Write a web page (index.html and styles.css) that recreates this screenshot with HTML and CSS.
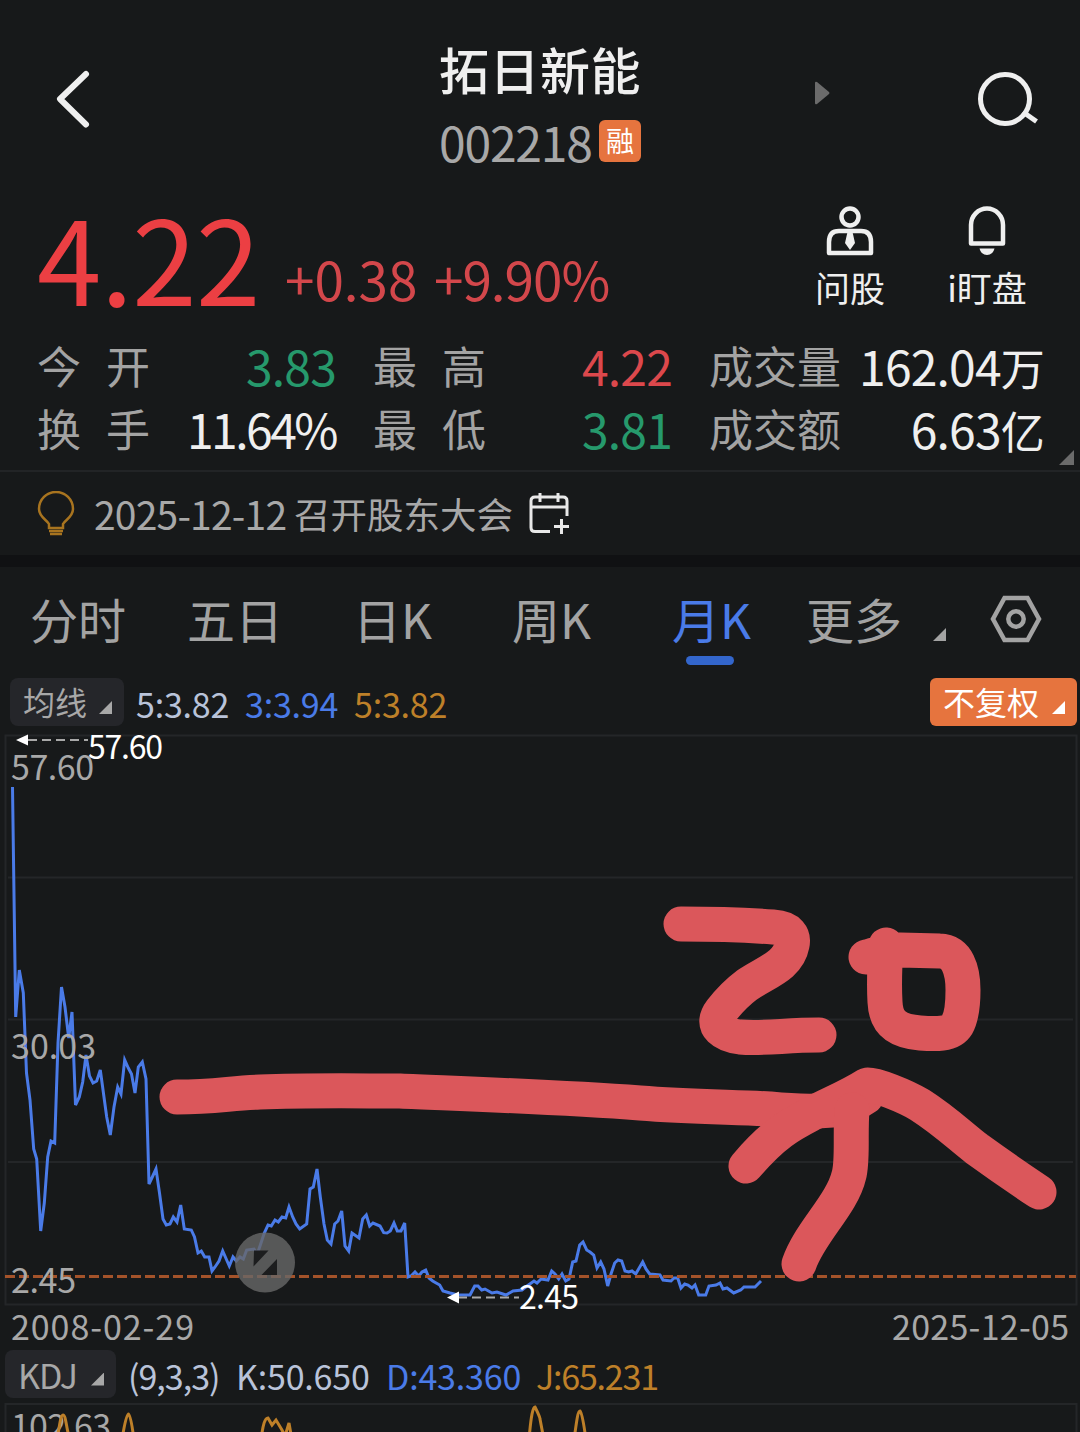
FILE: index.html
```html
<!DOCTYPE html>
<html lang="zh-CN">
<head>
  <meta charset="UTF-8">
  <meta name="viewport" content="width=device-width, initial-scale=1.0">
  <title>拓日新能 002218</title>
  <link rel="stylesheet" href="styles.css">
</head>
<body>
  <!-- Header -->
  <header class="header">
    <svg class="back" width="40" height="64" viewBox="0 0 40 64">
      <path d="M33 7 L7 32 L33 57.5" />
    </svg>
    <div class="stock">
      <h1>拓日新能</h1>
      <div class="code"><span>002218</span><i class="badge">融</i></div>
    </div>
    <svg class="next" width="15" height="24" viewBox="0 0 15 24">
      <path d="M0 2 Q0 0 2 1 L14 11 Q15 12 14 13 L2 23 Q0 24 0 22 Z" />
    </svg>
    <svg class="search" width="64" height="60" viewBox="0 0 64 60">
      <circle cx="30" cy="29" r="24.5" />
      <path d="M48 42 L61.5 51.5" />
    </svg>
  </header>

  <!-- Price -->
  <section class="quote">
    <div class="price">4.22</div>
    <div class="change"><span>+0.38</span><span class="pct">+9.90%</span></div>
    <div class="actions">
      <div class="action">
        <svg width="50" height="52" viewBox="0 0 50 52">
          <circle cx="25" cy="12" r="8.5" />
          <path d="M4 48 V37 Q4 26 14 26 H36 Q46 26 46 37 V48 Z" />
          <path class="fill" d="M22.5 27 H27.5 L30 38 L25 45 L20 38 Z" />
        </svg>
        <span>问股</span>
      </div>
      <div class="action">
        <svg width="50" height="52" viewBox="0 0 50 52">
          <path d="M9 38.5 V20 A16 16.5 0 0 1 41 20 V38.5 Z" />
          <path class="fill" d="M17.5 43.5 H32.5 Q31 50 25 50 Q19 50 17.5 43.5 Z" />
        </svg>
        <span>i盯盘</span>
      </div>
    </div>
  </section>

  <!-- Key figures -->
  <section class="stats">
    <div class="stat"><span class="label two">今开</span><span class="green">3.83</span></div>
    <div class="stat"><span class="label two">最高</span><span class="red">4.22</span></div>
    <div class="stat"><span class="label">成交量</span><span>162.04<b>万</b></span></div>
    <div class="stat"><span class="label two">换手</span><span class="tight">11.64%</span></div>
    <div class="stat"><span class="label two">最低</span><span class="green">3.81</span></div>
    <div class="stat"><span class="label">成交额</span><span>6.63<b>亿</b></span></div>
    <i class="corner expand"></i>
  </section>

  <!-- Notice -->
  <section class="notice">
    <svg class="bulb" width="38" height="46" viewBox="0 0 38 46">
      <path d="M12 37 V33 C10 29 2 26 2 18 A17 17 0 0 1 36 18 C36 26 28 29 26 33 V37 Z" />
      <path d="M12 40 H26 M13 43 H25" />
    </svg>
    <span class="date">2025-12-12</span>
    <span class="event">召开股东大会</span>
    <svg class="calendar" width="44" height="44" viewBox="0 0 44 44">
      <path d="M22 39.5 H7 Q3 39.5 3 35.5 V9 Q3 5 7 5 H35 Q39 5 39 9 V24" />
      <path d="M3 15 H39 M12 1 V10 M30 1 V10 M26 34.5 H41 M33.5 27 V42" />
    </svg>
  </section>

  <!-- Period tabs -->
  <nav class="tabs">
    <span>分时</span>
    <span>五日</span>
    <span>日K</span>
    <span>周K</span>
    <span class="active">月K</span>
    <span>更多</span>
    <i class="corner"></i>
    <svg width="52" height="48" viewBox="0 0 52 48">
      <path d="M14.5 3 H37.5 L49 24 L37.5 45 H14.5 L3 24 Z" />
      <circle cx="26" cy="24" r="7.7" />
    </svg>
  </nav>

  <!-- Moving averages -->
  <div class="indicator ma">
    <div class="select">均线<i class="corner"></i></div>
    <span class="pale">5:3.82</span>
    <span class="blue">3:3.94</span>
    <span class="gold">5:3.82</span>
    <div class="select orange">不复权<i class="corner"></i></div>
  </div>

  <!-- Monthly chart -->
  <svg class="chart" width="1080" height="612" viewBox="0 733 1080 612">
    <g class="grid">
      <rect x="5.5" y="735.5" width="1071" height="569" />
      <path d="M8 877.5 H1073 M8 1019.5 H1073 M8 1162 H1073" />
    </g>
    <polyline class="line" points="12.5,787 15.7,1017 19.3,970 23.3,993 26.5,1073 30,1100 33.7,1149 36.7,1159 40.7,1231 44.3,1203 47.7,1157 51,1141 54.7,1143 58,1043 61.5,987 65,1007 68.7,1038 72,1012 75.5,1105 79.3,1097 82.7,1082 86,1055 89.5,1076 93,1083 96.7,1081 100.3,1070 106.7,1117 110.3,1135 114,1107 117.7,1087 121,1094 124.7,1060 128.3,1068 131.5,1074 135,1093 138.3,1067 142.3,1062 146,1079 149,1184 152.3,1177 156,1169 159.5,1193 163,1219 166.3,1225 170,1224 173.3,1217 177,1222 180.7,1205 184.3,1229 191.3,1230 194.5,1237 198,1253 201.3,1251 204.7,1257 209,1257 212,1271 215,1267 219,1261 222.7,1251 229.3,1266 233,1257 236.3,1261 240,1257 243.3,1259 246.7,1250 254,1249 257.3,1254 261,1243 264.3,1233 268,1225 271.3,1226 275,1220 278.3,1222 282,1217 285.7,1218 289,1207 292.7,1217 296,1224 299.7,1229 306.7,1224 310,1189 313.3,1187 317,1169 320.3,1197 324,1224 327.3,1240 331,1244 334.7,1224 338,1221 341.7,1211 345,1246 348.7,1251 352,1233 359,1238 362.7,1219 366.3,1215 369.7,1226 373,1223 380,1226 383.7,1232.7 387,1233 390.3,1231 394,1223 397.3,1231 401,1231 404.7,1223 408,1277 411,1276 415,1272 418.7,1276 422,1272 425.7,1270 429,1278 432.7,1281 439.7,1285 443,1291 450,1293 458,1295 470,1295 474.7,1286 478,1286 481.7,1290 485,1289 492,1293 497,1292 506,1295 513,1291 522,1290 527,1286 534,1281 537,1283 541,1279 548,1280 551.7,1271 555,1274 558.7,1279 562,1274 565.7,1281 569,1279 572.7,1262 576,1261 579.7,1245 583,1242 586.7,1250 590,1252 593.7,1255 597,1268 600.7,1262 604,1269 607.7,1286 611,1274 614.7,1263 618,1260 621.7,1261 625,1271 628.7,1272 632,1271 635.7,1274 642.7,1262 646,1269 649.7,1274 660,1275 663,1280 671,1281 674,1278 677.7,1278 681,1288 684.7,1284 688,1285 692,1288 695,1285 698.7,1295 705.7,1295 709,1286 716,1285 720,1283 723,1289 727,1288 733.7,1293 740.7,1290 744,1287 755,1287 761,1281" />
    <path class="current" d="M5 1276.5 H1076" />

    <!-- Axis labels -->
    <g class="axis">
      <text x="11" y="780" textLength="83">57.60</text>
      <text x="11" y="1058.5" textLength="85">30.03</text>
      <text x="11" y="1292.5" textLength="65">2.45</text>
      <text x="11" y="1339.5" textLength="183">2008-02-29</text>
      <text x="892" y="1339.5" textLength="177">2025-12-05</text>
    </g>

    <!-- High and low marks -->
    <g class="mark">
      <path d="M28 740 H88 M458 1297.5 H519" />
      <polygon points="16,740 28,734.5 28,745.5" />
      <polygon points="447,1297.5 459,1291.5 459,1303.5" />
      <text x="88" y="759" textLength="75">57.60</text>
      <text x="519" y="1308.5" textLength="60">2.45</text>
    </g>

    <g class="rotate">
      <circle cx="265" cy="1262.5" r="30" />
      <path d="M254 1250.5 H268.5 L253.5 1266.5 Z M277 1259 V1275 H261.5 Z" />
    </g>

    <!-- Hand drawing -->
    <g class="brush">
      <path d="M681 924 C712 924 745 925 773 927 C790 928 794 936 792 945 C788 966 766 972 747 985 C735 994 728 1002 721 1011 C709 1027 725 1035 740 1037 C765 1039 785 1035 819 1035" />
      <path d="M866 957 C872 956 882 951 900 950 L940 951 C957 951 963 970 963 990 C963 1008 961 1018 957 1025 C951 1035 935 1034 920 1033 C895 1031 886 1022 885 1002 C884 985 885 960 886 945" />
      <path d="M177 1097 C215 1097 230 1093 260 1092 C310 1090 360 1091 400 1091 C470 1094 560 1097 640 1103 C690 1107 740 1107 770 1109 C800 1112 830 1112 850 1107 L866 1097" />
      <path d="M746 1166 C775 1132 792 1124 813 1113 C830 1104 850 1096 867 1085 C875 1084 905 1096 920 1105 C945 1121 960 1136 977 1149 C995 1162 1018 1178 1039 1192" />
      <path d="M852 1110 C850 1135 853 1160 849 1175 C842 1205 810 1232 799 1264" />
    </g>
  </svg>

  <!-- KDJ -->
  <div class="indicator kdj">
    <div class="select">KDJ<i class="corner"></i></div>
    <span class="pale params">(9,3,3)</span>
    <span class="pale">K:50.650</span>
    <span class="blue">D:43.360</span>
    <span class="gold">J:65.231</span>
  </div>
  <svg class="chart" width="1080" height="30" viewBox="0 1402 1080 30">
    <g class="grid"><path d="M5.5 1440 V1404 H1076.5 V1440" /></g>
    <g class="axis"><text x="11" y="1439" textLength="100">102.63</text></g>
    <path class="j-line" d="M57 1440 C60 1422 61 1415 63 1415 C66 1415 66 1428 70 1440 M122 1440 C125 1420 127 1414 128.5 1414 C130 1414 132 1424 134 1440 M261 1440 C263 1424 265 1418 268 1418 L272 1425 L276 1420 L282 1430 L285 1436 L289 1423 L292 1440 M529 1440 C531 1415 533 1407 535 1407 C537 1411 540 1417 540 1419 L544 1440 M574 1440 C577 1418 578 1411 580 1411 C582 1413 584 1425 586 1440" />
  </svg>
</body>
</html>
```

FILE: styles.css
```css
* {
  box-sizing: border-box;
}

body {
  width: 1080px;
  height: 1432px;
  margin: 0;
  overflow: hidden;
  background: #17191a;
  color: #efefef;
  font-family: "Noto Sans CJK SC", sans-serif;
}

i,
b {
  font-style: normal;
  font-weight: 400;
}

svg {
  display: block;
  flex: none;
  fill: none;
}

.red {
  color: #dc484c;
}

.green {
  color: #26996c;
}

.pale {
  color: #b9c3d9;
}

.blue {
  color: #4a7be8;
}

.gold {
  color: #be8029;
}

/* small triangle in the lower right of menus */
.corner {
  flex: none;
  width: 13px;
  height: 13px;
  background: currentColor;
  clip-path: polygon(100% 0, 100% 100%, 0 100%);
}

/* Header */
.header {
  display: flex;
  align-items: flex-start;
  height: 190px;
  padding-left: 53px;
}

.back {
  margin-top: 67px;
  stroke: #efefef;
  stroke-width: 6;
  stroke-linecap: round;
  stroke-linejoin: round;
}

.stock {
  width: 204px;
  margin-left: 346px;
  padding-top: 40px;
}

.stock h1 {
  margin: 0;
  font-size: 50px;
  font-weight: 500;
  line-height: 56px;
  letter-spacing: 0.5px;
}

.code {
  display: flex;
  align-items: center;
  height: 90px;
  color: #a8a8a8;
  font-size: 48px;
  line-height: 82px;
  letter-spacing: -1.2px;
}

.code span {
  width: 160px;
}

.badge {
  width: 42px;
  height: 42px;
  margin-top: -1px;
  border-radius: 6px;
  background: #e6743e;
  color: #fff;
  font-size: 28px;
  line-height: 40px;
  letter-spacing: 0;
  text-align: center;
}

.next {
  margin: 81px 0 0 172px;
  fill: #6b6b6b;
}

.search {
  margin: 70px 0 0 145px;
  stroke: #efefef;
  stroke-width: 5;
}

/* Price */
.quote {
  display: flex;
  height: 144px;
  padding-left: 37px;
}

.price {
  width: 248px;
  color: #ec3f43;
  font-size: 116px;
  line-height: 131px;
  letter-spacing: -0.7px;
}

.change {
  display: flex;
  width: 516px;
  color: #d3474b;
  font-size: 53px;
  line-height: 176px;
  letter-spacing: -1px;
}

.change span {
  width: 149px;
}

.change span:first-child {
  letter-spacing: 0;
}

.change .pct {
  width: 200px;
}

.actions {
  display: flex;
}

.action {
  display: flex;
  flex-direction: column;
  align-items: center;
  width: 98px;
  margin-right: 39px;
  padding-top: 15px;
  font-size: 35px;
  line-height: 60px;
}

.action svg {
  stroke: #efefef;
  stroke-width: 4.5;
  stroke-linejoin: round;
}

.action .fill {
  fill: #efefef;
  stroke: none;
}

.action span {
  white-space: nowrap;
}

/* Key figures */
.stats {
  position: relative;
  display: grid;
  grid-template-columns: 299px 299px 335px;
  grid-auto-rows: 63px;
  column-gap: 37px;
  height: 138px;
  padding-left: 37px;
  border-bottom: 2px solid #222426;
}

.stat {
  display: flex;
  justify-content: space-between;
  font-size: 48px;
  line-height: 62px;
  letter-spacing: -0.8px;
  white-space: nowrap;
}

.stat .label {
  color: #a3a3a3;
  font-size: 44px;
  letter-spacing: 0;
}

.stat .two {
  letter-spacing: 25px;
}

.stat .tight {
  letter-spacing: -2.5px;
}

.stat b {
  font-size: 44px;
}

.expand {
  position: absolute;
  right: 6px;
  bottom: 5px;
  width: 15px;
  height: 15px;
  color: #6b6b6b;
}

/* Notice */
.notice {
  display: flex;
  align-items: center;
  height: 83px;
  padding-left: 37px;
  color: #a8a8a8;
  line-height: 83px;
}

.bulb {
  stroke: #a8741f;
  stroke-width: 2.5;
}

.date {
  width: 200px;
  margin-left: 19px;
  font-size: 39px;
  letter-spacing: -0.8px;
}

.event {
  width: 234px;
  font-size: 36.5px;
}

.calendar {
  stroke: #e8e8e8;
  stroke-width: 3;
}

/* Period tabs */
.tabs {
  display: grid;
  grid-template-columns: 157px 166px 159px 160px 134px 127px 57px 52px;
  align-items: center;
  height: 118px;
  padding: 0 0 3px 30px;
  border-top: 12px solid #101113;
  color: #a3a3a3;
  font-size: 48px;
  line-height: 103px;
}

.tabs .active {
  position: relative;
  color: #4a7be8;
}

.tabs .active::after {
  content: "";
  position: absolute;
  left: 14px;
  top: 89px;
  width: 48px;
  height: 9px;
  border-radius: 5px;
  background: #3366cc;
}

.tabs .corner {
  margin-top: 32px;
}

.tabs svg {
  stroke: currentColor;
  stroke-width: 4.5;
}

/* Indicator rows */
.indicator {
  display: flex;
  align-items: center;
  height: 60px;
  padding: 0 3px 2px 10px;
  font-size: 34px;
}

.indicator span {
  width: 109px;
  padding-top: 2px;
  white-space: nowrap;
  letter-spacing: -0.2px;
}

.select {
  display: flex;
  align-items: center;
  justify-content: space-between;
  width: 114px;
  height: 48px;
  margin-right: 12px;
  padding: 0 12px 2px 13px;
  border-radius: 8px;
  background: #25262a;
  color: #a8a8a8;
  font-size: 32px;
}

.select .corner {
  margin-top: 13px;
}

.orange {
  width: 147px;
  margin: 0 0 0 auto;
  border-radius: 6px;
  background: #e6743e;
  color: #fff;
}

.kdj {
  height: 57px;
  padding: 0 0 0 5px;
}

.kdj .select {
  width: 111px;
  padding: 2px 12px 0 13px;
  font-size: 34px;
  letter-spacing: -1px;
}

.kdj .corner {
  margin-top: 9px;
}

.kdj span {
  width: 150px;
  padding-top: 3px;
}

.kdj .params {
  width: 108px;
  letter-spacing: -1px;
}

.kdj .gold {
  letter-spacing: -1.2px;
}

/* Charts */
.chart text {
  font-size: 34px;
}

.grid {
  stroke: #242628;
  stroke-width: 2;
}

.line {
  stroke: #4a7be8;
  stroke-width: 3;
}

.current {
  stroke: #a4532a;
  stroke-width: 3;
  stroke-dasharray: 10 4;
}

.axis {
  fill: #a8a8a8;
}

.mark {
  fill: #fff;
}

.mark path {
  stroke: #a8a8a8;
  stroke-width: 2;
  stroke-dasharray: 9 5;
}

.chart .mark text {
  font-size: 32px;
}

.rotate circle {
  fill: #686868;
  fill-opacity: 0.8;
}

.rotate path {
  fill: #1c1d1e;
}

.brush {
  stroke: #db575b;
  stroke-width: 35;
  stroke-linecap: round;
  stroke-linejoin: round;
}

.j-line {
  stroke: #be8029;
  stroke-width: 3;
}
```
